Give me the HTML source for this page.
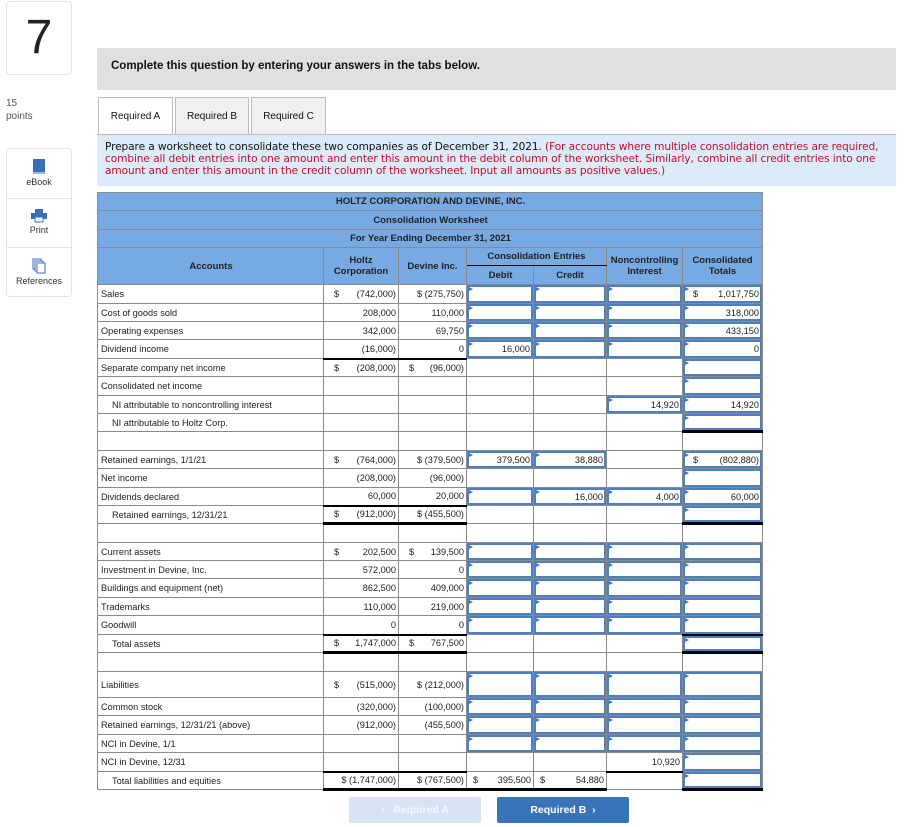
<!DOCTYPE html>
<html><head><meta charset="utf-8"><style>
*{margin:0;padding:0;box-sizing:border-box}
body{width:920px;height:827px;background:#fff;position:relative;font-family:"Liberation Sans",Arial,sans-serif;color:#222;overflow:hidden}
.abs{position:absolute}
.num7{left:6px;top:1px;width:66px;height:74px;border:1px solid #e4e4e4;border-radius:4px;font-size:48px;text-align:center;line-height:72px;color:#222}
.pts{left:6px;top:97px;font-size:10px;color:#555;line-height:13px}
.side{left:6px;top:148px;width:66px;height:149px;border:1px solid #e4e4e4;border-radius:4px}
.side div{height:49.6px;border-bottom:1px solid #e4e4e4;text-align:center;font-size:9px;color:#333;padding-top:10px}
.side div:last-child{border-bottom:none}
.bar{left:97px;top:48px;width:799px;height:42px;background:#e0e0e0;font-weight:bold;font-size:11.5px;padding:12px 0 0 14px;color:#111}
.tab{top:97px;height:38px;border:1px solid #bbb;background:#f0f0f0;font-size:10px;text-align:center;line-height:37px;color:#111}
.instr{left:97px;top:135px;width:799px;height:51px;background:#dcebf9;font-family:"DejaVu Sans",Verdana,sans-serif;font-size:10.6px;line-height:12px;padding:6px 0 0 8px;color:#111;white-space:nowrap;letter-spacing:-0.1px}
.red{color:#c0102a}
table{position:absolute;left:97px;top:192px;border-collapse:collapse;table-layout:fixed;font-size:9.2px}
td{border:1px solid #8a8a8a;padding:0 2px;white-space:nowrap;text-align:right;position:relative}
td:first-child{text-align:left;padding-left:3px}
.hd td{background:#77a9e2;text-align:center;font-weight:bold;font-size:9.5px;color:#222;line-height:11px}
.hd td:first-child{text-align:center}
td.i{box-shadow:inset 0 0 0 2px #4f7fbf;padding-right:3px}
td.i::before{content:"";position:absolute;left:2px;top:2px;border-left:4px solid #3a78c8;border-top:2px solid transparent;border-bottom:2px solid transparent}
.d{float:left;padding-left:8px}
.ind{padding-left:14px!important}
.bt{border-top:2px solid #000}
.bb{border-bottom:3px solid #000}
.btn{top:797px;height:26px;font-size:10.5px;font-weight:bold;text-align:center;line-height:26px;color:#fff;border-radius:2px}
</style></head><body>
<div class="abs num7">7</div>
<div class="abs pts">15<br>points</div>
<div class="abs side">
<div><svg width="14" height="16" viewBox="0 0 14 16"><rect x="1" y="0" width="12" height="14" fill="#3a6fb8"/><rect x="1" y="13" width="12" height="2" fill="#9cb8dd"/></svg><br>eBook</div>
<div><svg width="18" height="14" viewBox="0 0 18 14"><rect x="5" y="0" width="8" height="4" fill="#3a6fb8"/><rect x="1" y="4" width="16" height="6" fill="#3a6fb8"/><rect x="5" y="8" width="8" height="5" fill="#fff" stroke="#3a6fb8"/></svg><br>Print</div>
<div><svg width="14" height="16" viewBox="0 0 14 16"><rect x="1" y="1" width="8" height="10" fill="#fff" stroke="#3a6fb8"/><rect x="3" y="3" width="8" height="10" fill="#fff" stroke="#3a6fb8"/><rect x="5" y="5" width="8" height="10" fill="#fff" stroke="#3a6fb8"/></svg><br>References</div>
</div>
<div class="abs bar">Complete this question by entering your answers in the tabs below.</div>
<div class="abs tab" style="left:98px;width:75px;background:#fff;border-bottom:none;height:39px">Required A</div>
<div class="abs tab" style="left:175px;width:74px">Required B</div>
<div class="abs tab" style="left:251px;width:75px">Required C</div>
<div class="abs" style="left:97px;top:134px;width:799px;height:1px;background:#bbb"></div>
<div class="abs instr">Prepare a worksheet to consolidate these two companies as of December 31, 2021. <span class="red">(For accounts where multiple consolidation entries are required,</span><br><span class="red">combine all debit entries into one amount and enter this amount in the debit column of the worksheet. Similarly, combine all credit entries into one</span><br><span class="red">amount and enter this amount in the credit column of the worksheet. Input all amounts as positive values.)</span></div>

<table>
<colgroup><col style="width:226px"><col style="width:75px"><col style="width:68px"><col style="width:67px"><col style="width:73px"><col style="width:76px"><col style="width:80px"></colgroup>
<tr class="hd" style="height:18px"><td colspan="7">HOLTZ CORPORATION AND DEVINE, INC.</td></tr>
<tr class="hd" style="height:19px"><td colspan="7">Consolidation Worksheet</td></tr>
<tr class="hd" style="height:18px"><td colspan="7">For Year Ending December 31, 2021</td></tr>
<tr class="hd" style="height:18px"><td rowspan="2">Accounts</td><td rowspan="2">Holtz<br>Corporation</td><td rowspan="2">Devine Inc.</td><td colspan="2" style="border-bottom:1px solid #000">Consolidation Entries</td><td rowspan="2">Noncontrolling<br>Interest</td><td rowspan="2">Consolidated<br>Totals</td></tr>
<tr class="hd" style="height:19px"><td>Debit</td><td>Credit</td></tr>
<tr style="height:19px"><td>Sales</td><td><span class="d">$</span>(742,000)</td><td>$ (275,750)</td><td class="i"></td><td class="i"></td><td class="i"></td><td class="i"><span class="d">$</span>1,017,750</td></tr>
<tr style="height:18px"><td>Cost of goods sold</td><td>208,000</td><td>110,000</td><td class="i"></td><td class="i"></td><td class="i"></td><td class="i">318,000</td></tr>
<tr style="height:18px"><td>Operating expenses</td><td>342,000</td><td>69,750</td><td class="i"></td><td class="i"></td><td class="i"></td><td class="i">433,150</td></tr>
<tr style="height:19px"><td>Dividend income</td><td>(16,000)</td><td>0</td><td class="i">16,000</td><td class="i"></td><td class="i"></td><td class="i">0</td></tr>
<tr style="height:18px"><td>Separate company net income</td><td class="bt"><span class="d">$</span>(208,000)</td><td class="bt"><span class="d" style="padding-left:8px">$</span>(96,000)</td><td></td><td></td><td></td><td class="i"></td></tr>
<tr style="height:19px"><td>Consolidated net income</td><td></td><td></td><td></td><td></td><td></td><td class="i"></td></tr>
<tr style="height:18px"><td class="ind">NI attributable to noncontrolling interest</td><td></td><td></td><td></td><td></td><td class="i">14,920</td><td class="i">14,920</td></tr>
<tr style="height:18px"><td class="ind">NI attributable to Holtz Corp.</td><td></td><td></td><td></td><td></td><td></td><td class="i bb"></td></tr>
<tr style="height:19px"><td></td><td></td><td></td><td></td><td></td><td></td><td></td></tr>
<tr style="height:18px"><td>Retained earnings, 1/1/21</td><td><span class="d">$</span>(764,000)</td><td>$ (379,500)</td><td class="i">379,500</td><td class="i">38,880</td><td></td><td class="i"><span class="d">$</span>(802,880)</td></tr>
<tr style="height:19px"><td>Net income</td><td>(208,000)</td><td>(96,000)</td><td></td><td></td><td></td><td class="i"></td></tr>
<tr style="height:18px"><td>Dividends declared</td><td>60,000</td><td>20,000</td><td class="i"></td><td class="i">16,000</td><td class="i">4,000</td><td class="i">60,000</td></tr>
<tr style="height:18px"><td class="ind">Retained earnings, 12/31/21</td><td class="bt bb"><span class="d">$</span>(912,000)</td><td class="bt bb">$ (455,500)</td><td></td><td></td><td></td><td class="i bb"></td></tr>
<tr style="height:19px"><td></td><td></td><td></td><td></td><td></td><td></td><td></td></tr>
<tr style="height:18px"><td>Current assets</td><td><span class="d">$</span>202,500</td><td><span class="d" style="padding-left:8px">$</span>139,500</td><td class="i"></td><td class="i"></td><td class="i"></td><td class="i"></td></tr>
<tr style="height:18px"><td>Investment in Devine, Inc.</td><td>572,000</td><td>0</td><td class="i"></td><td class="i"></td><td class="i"></td><td class="i"></td></tr>
<tr style="height:19px"><td>Buildings and equipment (net)</td><td>862,500</td><td>409,000</td><td class="i"></td><td class="i"></td><td class="i"></td><td class="i"></td></tr>
<tr style="height:18px"><td>Trademarks</td><td>110,000</td><td>219,000</td><td class="i"></td><td class="i"></td><td class="i"></td><td class="i"></td></tr>
<tr style="height:19px"><td>Goodwill</td><td>0</td><td>0</td><td class="i"></td><td class="i"></td><td class="i"></td><td class="i"></td></tr>
<tr style="height:18px"><td class="ind">Total assets</td><td class="bt bb"><span class="d">$</span>1,747,000</td><td class="bt bb"><span class="d" style="padding-left:8px">$</span>767,500</td><td></td><td></td><td></td><td class="i bt bb"></td></tr>
<tr style="height:19px"><td></td><td></td><td></td><td></td><td></td><td></td><td></td></tr>
<tr style="height:26px"><td>Liabilities</td><td><span class="d">$</span>(515,000)</td><td>$ (212,000)</td><td class="i"></td><td class="i"></td><td class="i"></td><td class="i"></td></tr>
<tr style="height:18px"><td>Common stock</td><td>(320,000)</td><td>(100,000)</td><td class="i"></td><td class="i"></td><td class="i"></td><td class="i"></td></tr>
<tr style="height:19px"><td>Retained earnings, 12/31/21 (above)</td><td>(912,000)</td><td>(455,500)</td><td class="i"></td><td class="i"></td><td class="i"></td><td class="i"></td></tr>
<tr style="height:18px"><td>NCI in Devine, 1/1</td><td></td><td></td><td class="i"></td><td class="i"></td><td class="i"></td><td class="i"></td></tr>
<tr style="height:19px"><td>NCI in Devine, 12/31</td><td></td><td></td><td></td><td></td><td style="border-bottom:2px solid #000">10,920</td><td class="i"></td></tr>
<tr style="height:18px"><td class="ind">Total liabilities and equities</td><td class="bt bb">$ (1,747,000)</td><td class="bt bb">$ (767,500)</td><td class="bb"><span class="d" style="padding-left:4px">$</span>395,500</td><td class="bb"><span class="d" style="padding-left:4px">$</span>54,880</td><td></td><td class="i bb"></td></tr>
</table>

<div class="abs btn" style="left:349px;width:132px;background:#d6e3f2;color:#f4f8fc">&lsaquo;&nbsp;&nbsp; Required A</div>
<div class="abs btn" style="left:497px;width:132px;background:#3a74b8">Required B &nbsp;&rsaquo;</div>
</body></html>
